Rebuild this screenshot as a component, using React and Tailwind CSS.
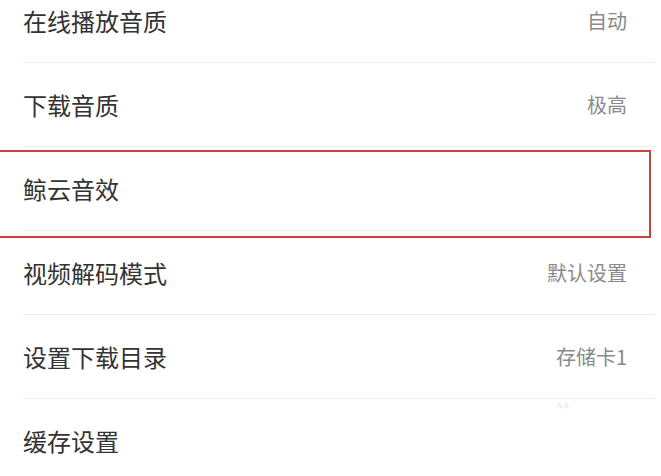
const rows = [
  { label: "在线播放音质", value: "自动" },
  { label: "下载音质", value: "极高" },
  { label: "鲸云音效", value: "" },
  { label: "视频解码模式", value: "默认设置" },
  { label: "设置下载目录", value: "存储卡1" },
  { label: "缓存设置", value: "" },
];

export default function App() {
  return (
    <div
      className="relative w-[661px] h-[476px] overflow-hidden bg-white"
      style={{ fontFamily: '"Noto Sans CJK SC", "Noto Sans", sans-serif' }}
    >
      <div className="-mt-[21px] flex flex-col">
        {rows.map((row, i) => (
          <div key={i} className="flex flex-col">
            <div className="h-[83px] flex items-center justify-between pl-[23px] pr-[34px]">
              <span className="text-[24px] leading-none text-[#333333]">{row.label}</span>
              {row.value && (
                <span className="text-[20px] leading-none text-[#8a8a8a]">{row.value}</span>
              )}
            </div>
            {i < rows.length - 1 && (
              <div className="ml-[23px] mr-[6px] h-px bg-[#eeeeee]"></div>
            )}
          </div>
        ))}
      </div>

      {/* red highlight box */}
      <div className="absolute left-[-2px] top-[150px] w-[653px] h-[88px] border-2 border-[#c8453f]"></div>

      {/* faint watermark */}
      <div className="absolute left-[556px] top-[398px] text-[12px] text-[#e4e4e4]">^^</div>
    </div>
  );
}
